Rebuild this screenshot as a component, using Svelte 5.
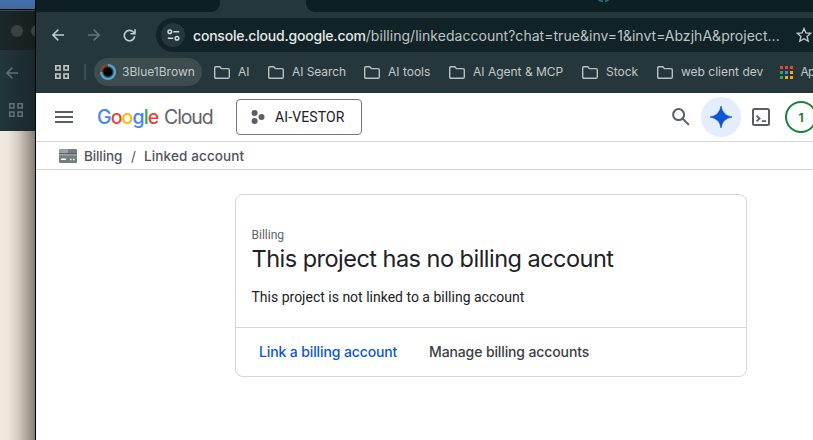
<script>
  const bookmarks = [
    { label: 'AI', width: 54, track: 0 },
    { label: 'AI Search', width: 96, track: -0.08 },
    { label: 'AI tools', width: 85, track: 0 },
    { label: 'AI Agent & MCP', width: 133, track: 0 },
    { label: 'Stock', width: 75, track: 0 },
    { label: 'web client dev', width: 122, track: 0 }
  ];
  const dots = ['#ea4335', '#ea4335', '#ea4335', '#34a853', '#4285f4', '#f9ab00', '#34a853', '#f9ab00', '#f9ab00'];
  const logo = [
    ['G', '#4285f4'],
    ['o', '#ea4335'],
    ['o', '#fbbc04'],
    ['g', '#4285f4'],
    ['l', '#34a853'],
    ['e', '#ea4335']
  ];
</script>

{#snippet grid()}
  <svg width="14" height="14" viewBox="0 0 14 14" fill="none" stroke="currentColor" stroke-width="1.6">
    <path d="M.8.8h4.2v4.2H.8zM9 .8h4.2v4.2H9zM.8 9h4.2v4.2H.8zM9 9h4.2v4.2H9z" />
  </svg>
{/snippet}

{#snippet back()}
  <svg width="12" height="12" viewBox="0 0 12 12" fill="none" stroke="currentColor" stroke-width="1.5">
    <path d="M12 6H1M6.3.6.9 6l5.4 5.4" />
  </svg>
{/snippet}

<div class="screen">
  <aside>
    <div class="sky"></div>
    <div class="lights"><i></i><i></i></div>
    <div class="rear-tools">
      <span class="rear-back">{@render back()}</span>
      <span class="rear-grid">{@render grid()}</span>
    </div>
    <div class="paper"></div>
  </aside>

  <div class="window">
    <div class="tabs">
      <div class="tab left"></div>
      <div class="tab right">
        <svg width="14" height="3" viewBox="0 0 14 3"><path d="M1 -.8c1 1.500 3 2 5 2M8 1.200c2 0 3-.8 4-2" fill="none" stroke="#217579" stroke-width="1.600" /></svg>
      </div>
    </div>

    <div class="toolbar">
      <span class="nav a">{@render back()}</span>
      <span class="nav fwd">{@render back()}</span>
      <span class="nav reload">
        <svg width="13" height="13" viewBox="0 0 13 13" fill="none" stroke="currentColor" stroke-width="1.6">
          <path d="M11.700 7.200A5.200 5.200 0 1 1 10.300 3L11.500 4.300" /><path d="M12 .3v4.500H7.500" />
        </svg>
      </span>
      <div class="omnibox">
        <span class="tune">
          <svg width="13" height="12" viewBox="0 0 13 12" fill="none" stroke="currentColor" stroke-width="1.500">
            <circle cx="2.800" cy="2.700" r="1.800" /><path d="M6.300 2.700h5.900M.8 9.200h5.400" /><circle cx="10" cy="9.200" r="1.800" />
          </svg>
        </span>
        <span class="url"><b>console.cloud.google.com</b><span class="path">/billing/linkedaccount?chat=true&amp;inv=1&amp;invt=AbzjhA&amp;project...</span></span>
        <svg class="star" width="16" height="16" viewBox="0 0 16 16" fill="none" stroke="#c4cccd" stroke-width="1.300">
          <path d="m8 1.500 1.900 4.400 4.800.4-3.600 3.200 1.100 4.700L8 11.700l-4.200 2.500 1.100-4.700L1.300 6.300l4.800-.4z" />
        </svg>
      </div>
    </div>

    <div class="bookmarks">
      <span class="apps">{@render grid()}</span>
      <span class="divider"></span>
      <span class="pill"><i class="eye"></i><span class="blue">3Blue1Brown</span></span>
      {#each bookmarks as b}
        <span class="bookmark" style="width:{b.width}px;letter-spacing:{b.track}px">
          <svg width="16" height="13" viewBox="0 0 16 13" fill="none" stroke="#b9c2c3" stroke-width="1.400">
            <path d="M.7 11V2Q.7.800 1.900.800H5.800L7.400 2.600H14Q15.300 2.600 15.300 3.900V11Q15.300 12.200 14 12.200H1.900Q.7 12.200.7 11Z" />
          </svg>
          <span class="name">{b.label}</span>
        </span>
      {/each}
      <span class="dots">{#each dots as d}<i style="background:{d}"></i>{/each}</span>
      <span class="cut">Ap</span>
    </div>

    <header>
      <svg class="menu" width="18" height="12" viewBox="0 0 18 12"><path d="M0 0h18v2H0zM0 5h18v2H0zM0 10h18v2H0z" fill="#5a5d66" /></svg>
      <div class="brand"><span class="google">{#each logo as [c, color]}<span style="color:{color}">{c}</span>{/each}</span><span class="cloud">Cloud</span></div>
      <button class="project">
        <svg width="14" height="14" viewBox="0 0 14 14" fill="#5a5d66"><circle cx="3.600" cy="3.100" r="3" /><circle cx="10.500" cy="7" r="3" /><circle cx="3.600" cy="11" r="3" /></svg>
        <span>AI-VESTOR</span>
      </button>
      <svg class="search" width="18" height="18" viewBox="0 0 18 18" fill="none" stroke="#5a5d66" stroke-width="2"><circle cx="6.600" cy="6.600" r="5.500" /><path d="m10.600 10.600 6.300 6.300" /></svg>
      <span class="gemini">
        <svg width="22" height="22" viewBox="0 0 22 22"><path d="M11 0Q12.500 9.500 22 11Q12.500 12.500 11 22Q9.500 12.500 0 11Q9.500 9.500 11 0Z" fill="#0b57d0" stroke="#0b57d0" stroke-width=".6" /></svg>
      </span>
      <svg class="shell" width="18" height="18" viewBox="0 0 18 18" fill="none" stroke="#5a5d66" stroke-width="2"><rect x="1" y="1" width="16" height="16" rx="1.500" /><path d="m4.500 7.700 3.200 2.800-3.200 2.800M9.800 13.200h4.200" stroke-width="1.700" /></svg>
      <span class="badge">1</span>
    </header>

    <nav>
      <svg width="18" height="14" viewBox="0 0 18 14">
        <rect width="18" height="14" rx="1" fill="#757c82" /><path d="M1 0h8v4H0V1z" fill="#9aa0a6" /><path d="M0 4h18v1.500H0z" fill="#5b6368" /><path d="M2 9.500h5v1.500H2z" fill="#fff" /><path d="M0 5.500h18v.8H0z" fill="#c9cccf" /><path d="M11 9.700h1.600v1.600h-1.600zM14 9.700h1.600v1.600h-1.600z" fill="#fff" />
      </svg>
      <span class="crumb one">Billing</span><span class="slash">/</span><span class="crumb two">Linked account</span>
    </nav>

    <main>
      <section>
        <div class="body">
          <small>Billing</small>
          <h1>This project has no billing account</h1>
          <p>This project is not linked to a billing account</p>
        </div>
        <footer><a class="link">Link a billing account</a><a class="manage">Manage billing accounts</a></footer>
      </section>
    </main>
  </div>
</div>

<style>
  * { box-sizing: border-box; }
  svg { display: block; flex: none; }
  .screen { display: flex; width: 813px; height: 440px; overflow: hidden; background: #fff; font-family: Inter, sans-serif; white-space: nowrap; }
  aside { display: flex; flex-direction: column; flex: none; width: 36px; border-right: 1px solid #000; overflow: hidden; }
  .sky { height: 10px; background: linear-gradient(#4272ad, #44699b); border-bottom: 1px solid #050a0c; }
  .lights { display: flex; gap: 8px; height: 40px; padding: 14px 0 0 11px; border-top: 1px solid #3d4849; background: linear-gradient(90deg, #1b2829, #151f20); }
  .lights i { flex: none; width: 12px; height: 12px; border-radius: 50%; background: #394243; }
  .rear-tools { display: flex; flex-direction: column; gap: 24px; height: 81px; padding: 17px 0 0 6px; background: linear-gradient(90deg, #23363a, #19282b); color: #607073; }
  .rear-grid { padding-left: 3px; }
  .paper { flex: 1; background: linear-gradient(90deg, #f2eadc 0, #eee6d9 8px, #d4ccc0 18px, #aaa499 27px, #858077 35px); }

  .window { flex: none; width: 777px; background: #fff; }
  .tabs { display: flex; justify-content: space-between; height: 12px; background: #25373a; }
  .tab { background: #0d1f22; }
  .left { width: 184px; border-radius: 0 0 9px 0; }
  .right { width: 507px; border-radius: 0 0 0 9px; padding-left: 291px; }

  .toolbar { display: flex; align-items: center; height: 46px; background: #25373a; color: #b9cfd3; }
  .nav { width: 36px; padding-left: 16px; }
  .fwd { color: #647477; transform: scaleX(-1); padding: 0 0 0 8px; }
  .reload { width: 48px; padding-left: 15px; }
  .omnibox { display: flex; align-items: center; flex: 1; height: 34px; padding-left: 5px; border-radius: 17px 0 0 17px; background: #122327; }
  .tune { display: grid; flex: none; place-items: center; width: 24px; height: 24px; border-radius: 50%; background: #25373a; color: #d0d8d9; }
  .url { flex: none; width: 611px; padding-left: 8px; font-size: 14px; color: #bdc5c6; }
  .url b { font-weight: 500; letter-spacing: -.2px; color: #e3e9e9; }
  .path { letter-spacing: .035px; }

  .bookmarks { display: flex; align-items: center; height: 35px; padding: 0 0 7px 19px; background: #25373a; color: #c1c9ca; font-size: 12px; }
  .divider { flex: none; width: 2px; height: 16px; margin: 0 8px 0 15px; background: #3b4d50; }
  .apps { width: 14px; flex: none; }
  .pill { display: flex; flex: none; align-items: center; width: 108px; height: 28px; margin-right: 12px; padding-left: 6px; gap: 6px; border-radius: 14px; background: #3c4c4f; }
  .eye { width: 16px; height: 16px; border-radius: 50%; background: radial-gradient(closest-side, #000 0 48%, transparent 80%), conic-gradient(#5ba3c9 0 270deg, #87492b 270deg); }
  .bookmark { display: flex; flex: none; align-items: center; gap: 8px; }
  .name, .blue, .cut { padding-bottom: 1px; }
  .cut { letter-spacing: -.8px; margin-left: -.5px; }
  .dots { display: grid; flex: none; grid-template-columns: repeat(3, 3px); gap: 2px; width: 21px; margin-left: 1px; }
  .dots i { height: 3px; }

  header { display: flex; align-items: center; height: 49px; padding-left: 19px; border-bottom: 1px solid #d6d7da; }
  .brand { display: flex; flex: none; width: 140px; margin-left: 24px; font-size: 19.5px; line-height: 24px; color: #5f6368; }
  .google { width: 67px; font-weight: 500; letter-spacing: -.9px; }
  .cloud { letter-spacing: -1.1px; }
  .project { display: flex; flex: none; align-items: center; width: 126px; height: 36px; margin-left: -1px; padding: 0 0 0 14px; gap: 10px; border: 1px solid #747780; border-radius: 4px; background: #fff; color: #202124; font: 14px Roboto, sans-serif; letter-spacing: .13px; }
  .search { margin: 0 11px 0 310px; }
  .gemini { display: grid; flex: none; place-items: center; width: 40px; height: 40px; margin-right: 11px; border-radius: 50%; background: #e3edfd; }
  .badge { display: grid; flex: none; place-items: center; width: 32px; height: 32px; margin-left: 15px; border: 2px solid #188038; border-radius: 50%; color: #188038; font-size: 12px; font-weight: 700; }

  nav { display: flex; align-items: center; height: 28px; padding-left: 23px; border-bottom: 1px solid #d6d7da; color: #50545b; font-size: 13.500px; font-weight: 500; }
  .crumb.one { width: 47px; margin-left: 7px; letter-spacing: -.1px; }
  .crumb.two { letter-spacing: .13px; }
  .slash { width: 13px; font-weight: 400; }

  main { padding: 24px 0 0 199px; }
  section { width: 512px; height: 183px; border: 1px solid #d5d6da; border-radius: 8px; }
  .body { height: 133px; padding: 33px 16px 0 15.500px; border-bottom: 1px solid #d5d6da; color: #202124; }
  small { display: block; font: 12px/14px Roboto, sans-serif; color: #5f6368; }
  h1 { margin: 0; font-size: 23.5px; line-height: 34px; font-weight: 400; letter-spacing: -.52px; }
  p { margin: 13px 0 0; font: 14px/16px Roboto, sans-serif; }
  footer { display: flex; height: 47px; padding-left: 23px; align-items: center; font-size: 14px; font-weight: 500; }
  .link { width: 170px; color: #0b57d0; letter-spacing: -.12px; }
  .manage { color: #3c4043; letter-spacing: -.12px; }
</style>
